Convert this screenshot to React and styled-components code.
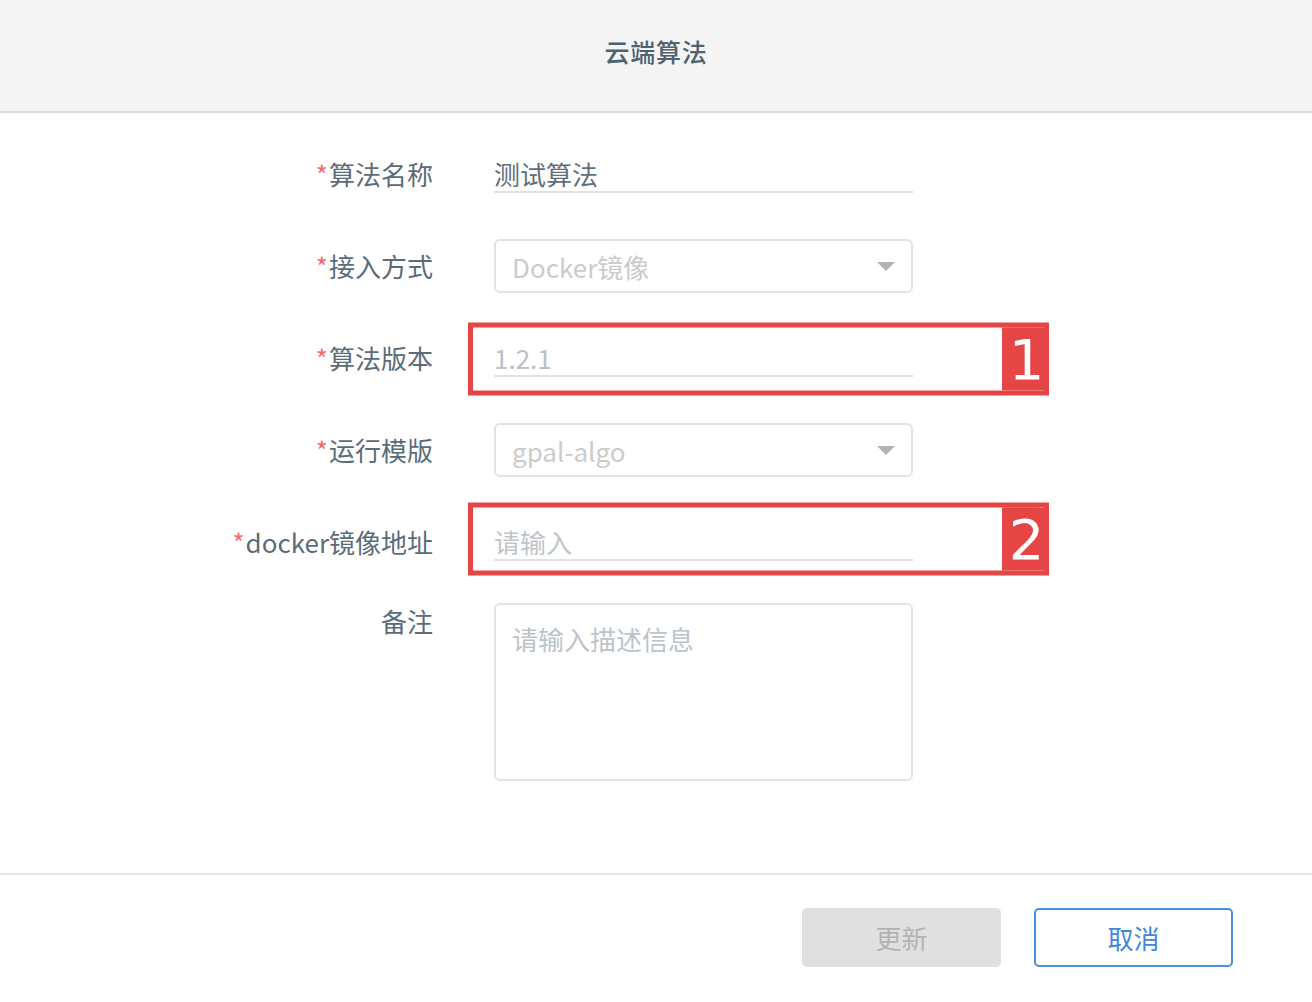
import React from "react";
import styled, { createGlobalStyle } from "styled-components";

const GlobalStyle = createGlobalStyle`
  html, body {
    margin: 0;
    padding: 0;
    background: #ffffff;
  }
  body {
    font-family: "Noto Sans CJK SC", "Noto Sans", sans-serif;
  }
  * { box-sizing: border-box; }
`;

const Page = styled.div`
  width: 1312px;
  min-height: 1002px;
  display: flex;
  flex-direction: column;
  background: #fff;
`;

const Header = styled.header`
  height: 113px;
  background: #f4f4f4;
  border-bottom: 2px solid #dcdcdc;
  display: flex;
  align-items: center;
  justify-content: center;
  padding-bottom: 10px;
`;

const Title = styled.h1`
  margin: 0;
  font-size: 25px;
  font-weight: 500;
  color: #4f6270;
  letter-spacing: 0.8px;
`;

const Form = styled.form`
  display: flex;
  flex-direction: column;
  padding: 15px 0 92px;
`;

const Row = styled.div`
  display: grid;
  grid-template-columns: 433px 419px;
  column-gap: 61px;
  align-items: ${(p) => (p.$top ? "start" : "center")};
  height: ${(p) => (p.$top ? "auto" : "92px")};
  padding-top: ${(p) => (p.$top ? "15px" : "0")};
`;

const Label = styled.label`
  text-align: right;
  font-size: 26px;
  line-height: 36px;
  color: #5b6c79;
  white-space: nowrap;
`;

const Star = styled.span`
  color: #f26a6a;
  font-size: 26px;
  margin-right: 1px;
`;

const Field = styled.div`
  position: relative;
  display: flex;
  align-items: center;
`;

const LineInput = styled.div`
  width: 100%;
  height: 36px;
  margin-top: 2px;
  border-bottom: 2px solid #e2e2e2;
  font-size: 26px;
  line-height: 33px;
  color: ${(p) => p.$tone};
  white-space: nowrap;
`;

const SelectBox = styled.div`
  width: 100%;
  height: 54px;
  border: 2px solid #e2e2e2;
  border-radius: 6px;
  padding: 0 16px;
  display: flex;
  align-items: center;
  justify-content: space-between;
  font-size: 26px;
  color: #cbcbcb;
  background: #fff;
`;

const Caret = styled.span`
  width: 0;
  height: 0;
  border-left: 9px solid transparent;
  border-right: 9px solid transparent;
  border-top: 9px solid #b4b4b4;
`;

const TextArea = styled.div`
  width: 100%;
  height: 178px;
  border: 2px solid #e2e2e2;
  border-radius: 6px;
  padding: 16px 16px;
  font-size: 26px;
  line-height: 36px;
  color: #bcc3c9;
`;

/* red callout frame with a numbered tab, drawn over a field */
const Callout = styled.div`
  position: absolute;
  left: -26px;
  top: calc(50% + ${(p) => p.$shift || 0}px);
  transform: translateY(-50%);
  width: 581px;
  height: 73px;
  border: 5px solid #e64545;
  display: flex;
  justify-content: flex-end;
  pointer-events: none;
`;

const CalloutTab = styled.div`
  width: 42px;
  height: 100%;
  background: #e64545;
  color: #fff;
  display: flex;
  align-items: center;
  justify-content: center;
  font-family: "DejaVu Sans", sans-serif;
  font-size: 56px;
  line-height: 1;
  padding-left: 7px;
`;

const Footer = styled.footer`
  border-top: 2px solid #e4e4e4;
  padding: 33px 79px 35px 0;
  display: flex;
  justify-content: flex-end;
  gap: 33px;
`;

const Button = styled.button`
  width: 199px;
  height: 59px;
  border-radius: 5px;
  font-family: "Noto Sans CJK SC", sans-serif;
  font-size: 26px;
  cursor: pointer;
  border: 2px solid ${(p) => (p.$primary ? "#4a8fe0" : "#e0e0e0")};
  background: ${(p) => (p.$primary ? "#ffffff" : "#e0e0e0")};
  color: ${(p) => (p.$primary ? "#3f86dd" : "#b3b3b3")};
`;

const fields = [
  { label: "算法名称", kind: "line", value: "测试算法", tone: "#5f6f7b" },
  { label: "接入方式", kind: "select", value: "Docker镜像" },
  { label: "算法版本", kind: "line", value: "1.2.1", tone: "#bac0c6", callout: "1", shift: 1 },
  { label: "运行模版", kind: "select", value: "gpal-algo" },
  { label: "docker镜像地址", kind: "line", value: "请输入", tone: "#bfc5cb", callout: "2", shift: -3 },
];

export default function App() {
  return (
    <>
      <GlobalStyle />
      <Page>
        <Header>
          <Title>云端算法</Title>
        </Header>
        <Form>
          {fields.map((f) => (
            <Row key={f.label}>
              <Label>
                <Star>*</Star>
                {f.label}
              </Label>
              <Field>
                {f.kind === "line" ? (
                  <LineInput $tone={f.tone}>{f.value}</LineInput>
                ) : (
                  <SelectBox>
                    <span>{f.value}</span>
                    <Caret />
                  </SelectBox>
                )}
                {f.callout && (
                  <Callout $shift={f.shift}>
                    <CalloutTab>{f.callout}</CalloutTab>
                  </Callout>
                )}
              </Field>
            </Row>
          ))}
          <Row $top>
            <Label>备注</Label>
            <Field>
              <TextArea>请输入描述信息</TextArea>
            </Field>
          </Row>
        </Form>
        <Footer>
          <Button type="button">更新</Button>
          <Button type="button" $primary>
            取消
          </Button>
        </Footer>
      </Page>
    </>
  );
}
